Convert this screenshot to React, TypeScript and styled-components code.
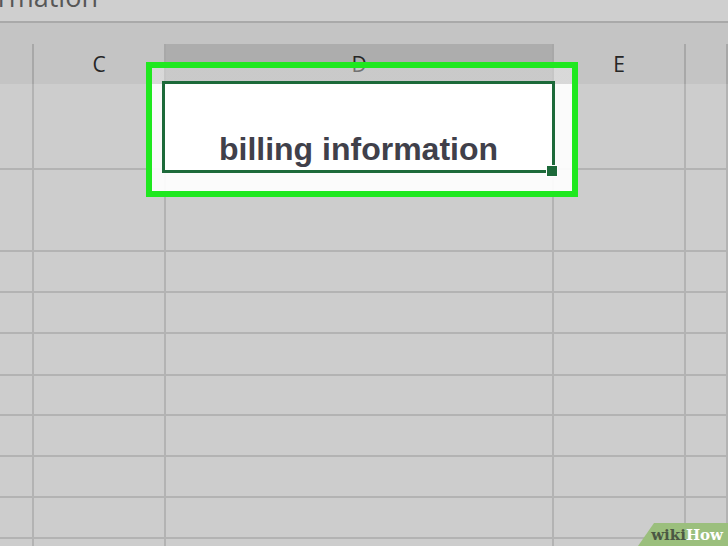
import React from "react";
import styled, { createGlobalStyle } from "styled-components";

const GlobalStyle = createGlobalStyle`
  html, body {
    margin: 0;
    padding: 0;
    background: #cdcdcd;
    overflow: hidden;
  }
`;

const COLUMNS = "34px 132px 388px 132px 1fr";
const ROW_HEIGHTS = [86, 82, 41, 41, 42, 40, 41, 41, 41, 41];

const Sheet = styled.div`
  position: relative;
  width: 728px;
  height: 546px;
  overflow: hidden;
  background: #cdcdcd;
  font-family: "Open Sans", "Liberation Sans", sans-serif;
`;

const FormulaBar = styled.div`
  height: 21px;
  overflow: hidden;
  background: #cfcfcf;
  border-bottom: 2px solid #a9a9a9;
`;

const FormulaText = styled.div`
  margin-top: -17px;
  margin-left: -51px;
  font-size: 27px;
  line-height: 27px;
  color: #575757;
  white-space: nowrap;
`;

const Spacer = styled.div`
  height: 21px;
  background: #c4c4c4;
`;

const HeaderRow = styled.div`
  display: grid;
  grid-template-columns: ${COLUMNS};
  height: 40px;
  background: #c4c4c4;
`;

const HeaderCell = styled.div<{ $selected?: boolean }>`
  display: flex;
  align-items: center;
  justify-content: center;
  box-sizing: border-box;
  border-right: 2px solid #a8a8a8;
  background: ${p => (p.$selected ? "#adadad" : "transparent")};
  font-size: 21px;
  color: #262626;
`;

const Body = styled.div`
  display: flex;
  flex-direction: column;
`;

const Row = styled.div`
  display: grid;
  grid-template-columns: ${COLUMNS};
`;

const Cell = styled.div`
  box-sizing: border-box;
  border-right: 2px solid #b3b3b3;
  border-bottom: 2px solid #b3b3b3;
  background: #cdcdcd;
`;

const Highlight = styled.div`
  position: absolute;
  left: 146px;
  top: 62px;
  width: 432px;
  height: 135px;
  box-sizing: border-box;
  border: 6px solid #1fe81f;
  background: linear-gradient(
    to bottom,
    rgba(255, 255, 255, 0.35) 0,
    rgba(255, 255, 255, 0.35) 16px,
    rgba(255, 255, 255, 0.92) 16px
  );
`;

const ActiveCell = styled.div`
  position: absolute;
  left: 162px;
  top: 81px;
  width: 393px;
  height: 92px;
  box-sizing: border-box;
  border: 3px solid #1d6a3a;
  background: #ffffff;
  padding-top: 49px;
  text-align: center;
  font-family: "Liberation Sans", Arial, sans-serif;
  font-weight: bold;
  font-size: 32px;
  line-height: 32px;
  color: #40404a;
  white-space: nowrap;
`;

const FillHandle = styled.div`
  position: absolute;
  left: 546px;
  top: 165px;
  width: 10px;
  height: 10px;
  background: #1d6a3a;
  border: 1px solid #ffffff;
`;

const Badge = styled.div`
  position: absolute;
  right: 0;
  bottom: 0;
  width: 90px;
  height: 23px;
  background: #9bbf7d;
  clip-path: polygon(16px 0, 100% 0, 100% 100%, 0 100%);
  display: flex;
  align-items: center;
  justify-content: flex-end;
  padding-right: 5px;
  box-sizing: border-box;
  font-family: "DejaVu Serif", "Liberation Serif", serif;
  font-weight: bold;
  font-size: 15px;
`;

const Wiki = styled.span`
  color: #4b5843;
`;

const How = styled.span`
  color: #ffffff;
`;

const headers = ["", "C", "D", "E", ""];

export default function App() {
  return (
    <Sheet>
      <GlobalStyle />
      <FormulaBar>
        <FormulaText>information</FormulaText>
      </FormulaBar>
      <Spacer />
      <HeaderRow>
        {headers.map((h, i) => (
          <HeaderCell key={i} $selected={h === "D"}>{h}</HeaderCell>
        ))}
      </HeaderRow>
      <Body>
        {ROW_HEIGHTS.map((h, r) => (
          <Row key={r} style={{ height: h }}>
            {headers.map((_, c) => <Cell key={c} />)}
          </Row>
        ))}
      </Body>
      <Highlight />
      <ActiveCell>billing information</ActiveCell>
      <FillHandle />
      <Badge>
        <Wiki>wiki</Wiki>
        <How>How</How>
      </Badge>
    </Sheet>
  );
}
